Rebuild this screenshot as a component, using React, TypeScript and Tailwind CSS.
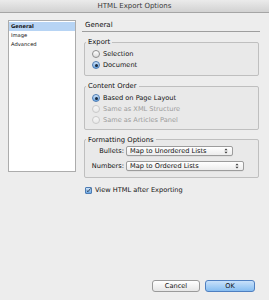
import React from "react";

function Radio({ checked, disabled }: { checked?: boolean; disabled?: boolean }) {
  if (checked) {
    return (
      <div className="w-[8px] h-[8px] rounded-full border border-[#4d7cb3] bg-gradient-to-b from-[#cfe3f7] to-[#6aa6e3] flex items-center justify-center shrink-0">
        <div className="w-[3px] h-[3px] rounded-full bg-[#1d2b3d]" />
      </div>
    );
  }
  return (
    <div
      className={
        disabled
          ? "w-[8px] h-[8px] rounded-full border border-[#c9c9c9] bg-gradient-to-b from-[#f7f7f7] to-[#e9e9e9] shrink-0"
          : "w-[8px] h-[8px] rounded-full border border-[#8e8e8e] bg-gradient-to-b from-[#ffffff] to-[#dcdcdc] shrink-0"
      }
    />
  );
}

function RadioRow({ label, checked, disabled }: { label: string; checked?: boolean; disabled?: boolean }) {
  return (
    <div className="h-[11px] flex items-center gap-[3px] pl-[6px]">
      <Radio checked={checked} disabled={disabled} />
      <span className={disabled ? "text-[#9b9b9b]" : "text-[#111]"}>{label}</span>
    </div>
  );
}

function Arrows() {
  return (
    <svg width="4" height="6" viewBox="0 0 4 6" className="shrink-0">
      <path d="M0.5 2.3 L2 0.6 L3.5 2.3 Z" fill="#333" />
      <path d="M0.5 3.7 L2 5.4 L3.5 3.7 Z" fill="#333" />
    </svg>
  );
}

function Select({ label, w }: { label: string; w: string }) {
  return (
    <div
      className={`${w} h-[10px] rounded-[2px] border border-[#9c9c9c] bg-gradient-to-b from-[#ffffff] to-[#ececec] flex items-center justify-between pl-[3px] pr-[4px] shadow-[0_0.5px_0_rgba(0,0,0,0.08)]`}
    >
      <span className="text-[#111] leading-none">{label}</span>
      <Arrows />
    </div>
  );
}

export default function App() {
  return (
    <div className="w-[269px] h-[300px] bg-[#ededed] flex flex-col overflow-hidden font-['DejaVu_Sans',sans-serif] text-[6.6px] leading-none text-[#111]">
      <div className="h-[13px] shrink-0 bg-gradient-to-b from-[#ebebeb] to-[#d2d2d2] border-b border-[#a5a5a5] flex items-center justify-center text-[7px] text-[#3a3a3a]">
        HTML Export Options
      </div>

      <div className="flex flex-1 pl-[8px] pr-[9px] pt-[7px]">
        <div className="w-[68px] h-[152px] bg-white border border-[#acacac] pt-px flex flex-col text-[5.2px] font-bold">
          <div className="h-[9px] bg-[#b7d4f4] flex items-center pl-[2px]">General</div>
          <div className="h-[9px] flex items-center pl-[2px] font-normal">Image</div>
          <div className="h-[9px] flex items-center pl-[2px] font-normal">Advanced</div>
        </div>

        <div className="flex-1 ml-[6px] flex flex-col">
          <div className="h-[12px] border-b border-[#9e9e9e] flex items-center pl-[3px] text-[7px]">General</div>

          <fieldset className="mt-[7px] ml-[2px] mr-px border border-[#bfbfbf] rounded-[2px] bg-[#e9e9e9] pl-px pr-0 pt-[3px] pb-[4px]">
            <legend className="px-[2px] text-[6.8px]">Export</legend>
            <RadioRow label="Selection" />
            <RadioRow label="Document" checked />
          </fieldset>

          <fieldset className="mt-[7px] ml-[2px] mr-px border border-[#bfbfbf] rounded-[2px] bg-[#e9e9e9] pl-px pr-0 pt-[3px] pb-[3px]">
            <legend className="px-[2px] text-[6.8px]">Content Order</legend>
            <RadioRow label="Based on Page Layout" checked />
            <RadioRow label="Same as XML Structure" disabled />
            <RadioRow label="Same as Articles Panel" disabled />
          </fieldset>

          <fieldset className="mt-[7px] ml-[2px] mr-px border border-[#bfbfbf] rounded-[2px] bg-[#e9e9e9] pl-px pr-0 pt-[3px] pb-[6px]">
            <legend className="px-[2px] text-[6.8px]">Formatting Options</legend>
            <div className="flex flex-col gap-[5px]">
              <div className="flex items-center">
                <span className="w-[40px] text-right pr-[2px]">Bullets:</span>
                <Select label="Map to Unordered Lists" w="w-[107px]" />
              </div>
              <div className="flex items-center">
                <span className="w-[40px] text-right pr-[2px]">Numbers:</span>
                <Select label="Map to Ordered Lists" w="w-[118px]" />
              </div>
            </div>
          </fieldset>

          <div className="mt-[7px] ml-[3px] h-[10px] flex items-center gap-[3px]">
            <div className="w-[7px] h-[7px] rounded-[1px] border border-[#4d7cb3] bg-gradient-to-b from-[#cfe3f7] to-[#6aa6e3] flex items-center justify-center">
              <svg width="7" height="7" viewBox="0 0 7 7">
                <path d="M1.2 3.6 L2.8 5.2 L6.4 0.6" stroke="#1d2b3d" strokeWidth="1.2" fill="none" />
              </svg>
            </div>
            <span>View HTML after Exporting</span>
          </div>
        </div>
      </div>

      <div className="flex justify-end gap-[5px] pr-[14px] pb-[8px] shrink-0">
        <div className="w-[48px] h-[12px] rounded-[3px] border border-[#9a9a9a] bg-gradient-to-b from-[#ffffff] to-[#e6e6e6] flex items-center justify-center text-[6.6px]">
          Cancel
        </div>
        <div className="w-[50px] h-[12px] rounded-[3px] border border-[#4f7fc0] bg-gradient-to-b from-[#c8e1fa] to-[#86bdf1] flex items-center justify-center text-[6.6px]">
          OK
        </div>
      </div>
    </div>
  );
}
